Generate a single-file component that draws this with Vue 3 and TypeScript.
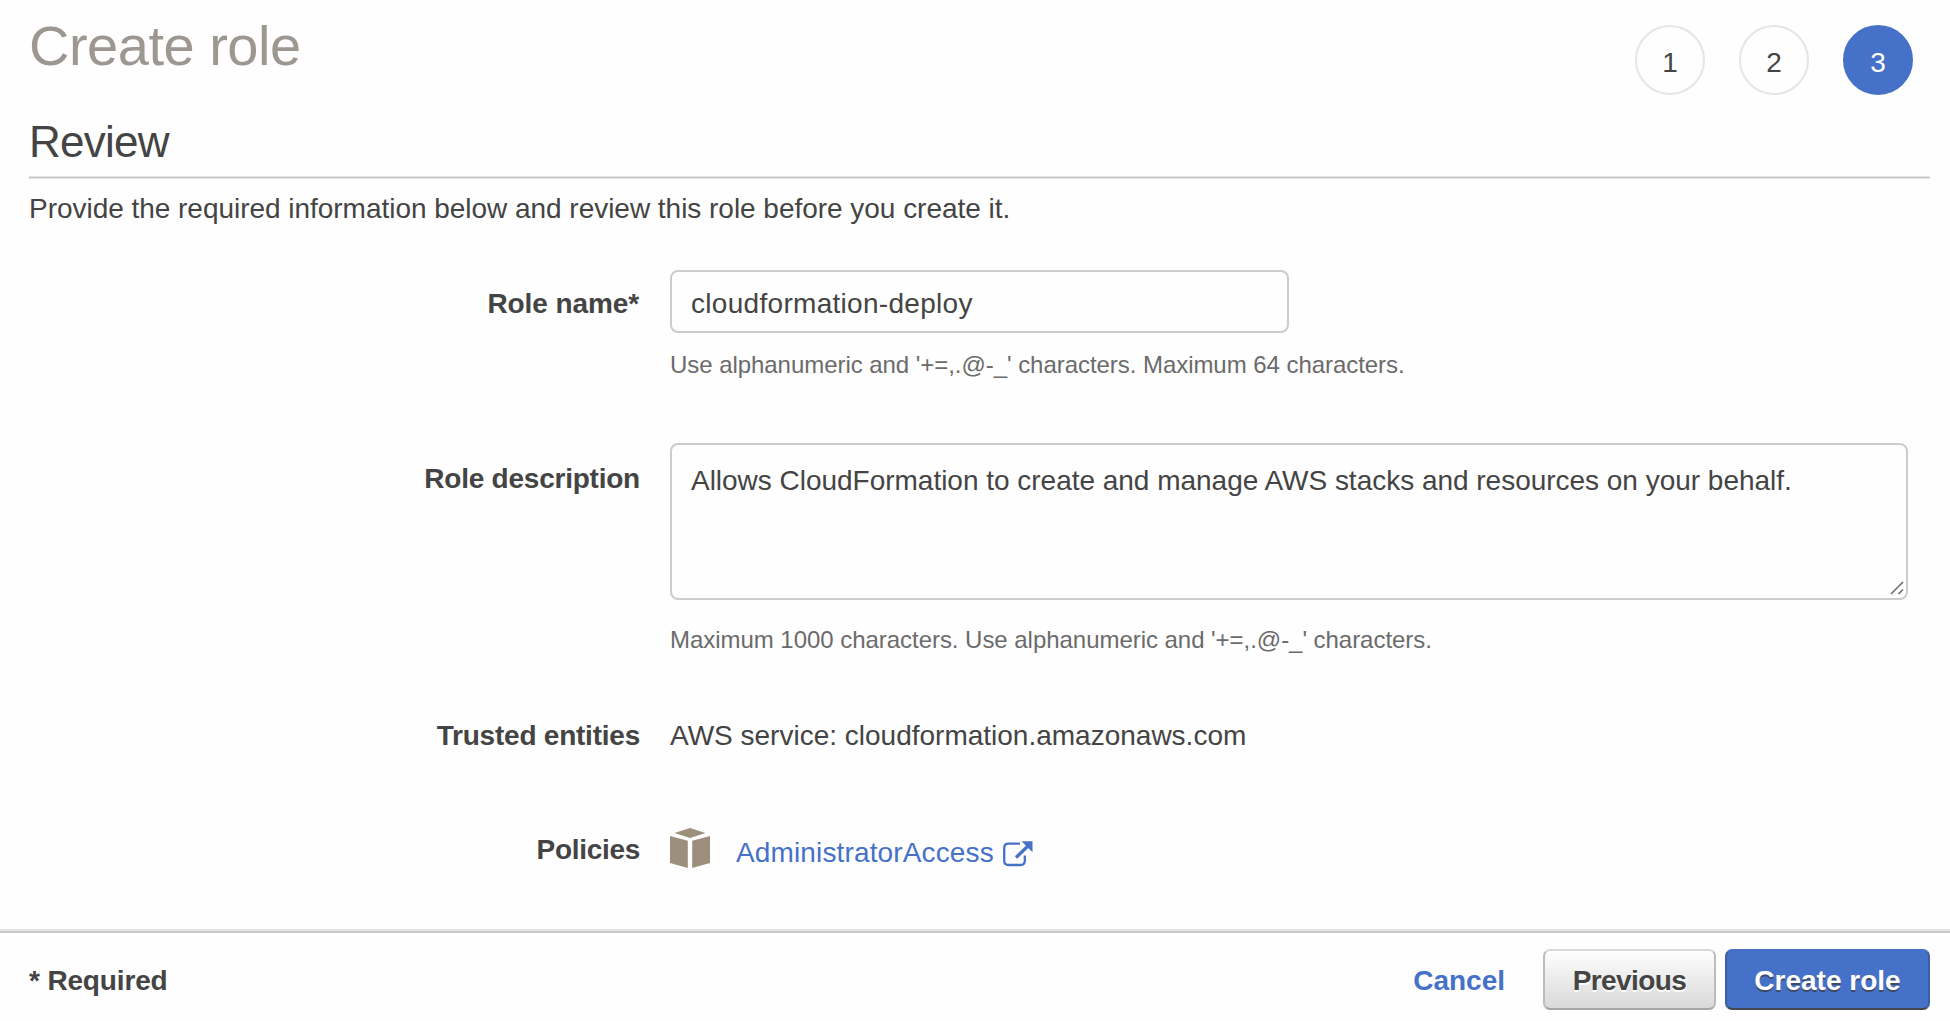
<script setup lang="ts">
import { ref } from 'vue'

const steps: number[] = [1, 2, 3]
const currentStep = ref<number>(3)
const roleName = ref<string>('cloudformation-deploy')
const roleDescription = ref<string>(
  'Allows CloudFormation to create and manage AWS stacks and resources on your behalf.'
)
</script>

<template>
  <div class="page">
    <header class="header">
      <h1 class="title">Create role</h1>
      <div class="steps">
        <div v-for="s in steps" :key="s" class="step" :class="{ active: s === currentStep }">{{ s }}</div>
      </div>
    </header>

    <main class="main">
      <h2 class="subtitle">Review</h2>
      <hr class="rule" />
      <p class="intro">Provide the required information below and review this role before you create it.</p>

      <div class="row row-name">
        <label class="label l-name">Role name*</label>
        <div class="field">
          <input v-model="roleName" class="input" type="text" />
          <div class="hint h-name">Use alphanumeric and '+=,.@-_' characters. Maximum 64 characters.</div>
        </div>
      </div>

      <div class="row row-desc">
        <label class="label l-desc">Role description</label>
        <div class="field">
          <div class="area-wrap">
            <textarea v-model="roleDescription" class="area"></textarea>
            <svg class="grip" viewBox="0 0 14 14" width="14" height="14">
              <path d="M1 13L13 1M8.5 13L13 8.5" fill="none" stroke="#6b6762" stroke-width="1.5" />
            </svg>
          </div>
          <div class="hint h-desc">Maximum 1000 characters. Use alphanumeric and '+=,.@-_' characters.</div>
        </div>
      </div>

      <div class="row row-trust">
        <div class="label l-trust">Trusted entities</div>
        <div class="value">AWS service: cloudformation.amazonaws.com</div>
      </div>

      <div class="row row-pol">
        <div class="label l-pol">Policies</div>
        <div class="policy">
          <svg class="cube" viewBox="0 0 40 40" width="40" height="40" fill="#9c8f7c">
            <path d="M4.500 5L20 0L35.500 5L20 10Z" />
            <path d="M0 8L17.800 12.800V40L0 35Z" />
            <path d="M40 8L22.200 12.800V40L40 35Z" />
          </svg>
          <a class="link">AdministratorAccess</a>
          <svg class="ext" viewBox="0 0 30 26" width="30" height="26">
            <path d="M17 2.600H5.500Q1.200 2.600 1.200 6.900V19.700Q1.200 24 5.500 24H17.500Q21.800 24 21.800 19.700V14.500" fill="none" stroke="#4671c8" stroke-width="2.300" />
            <path d="M13 16.500L25 5" fill="none" stroke="#4671c8" stroke-width="3.200" />
            <path d="M18.500 0.300H29.500V11.300Z" fill="#4671c8" />
          </svg>
        </div>
      </div>
    </main>

    <footer class="footer">
      <div class="required">* Required</div>
      <div class="actions">
        <a class="cancel">Cancel</a>
        <button class="btn prev">Previous</button>
        <button class="btn create">Create role</button>
      </div>
    </footer>
  </div>
</template>

<style>
body {
  margin: 0;
  background: #fefefe;
}
</style>

<style scoped>
.page {
  width: 1950px;
  height: 1021px;
  box-sizing: border-box;
  display: flex;
  flex-direction: column;
  overflow: hidden;
  background: #fefefe;
  color: #444;
  font-family: "Liberation Sans", Arial, sans-serif;
  font-size: 28px;
  line-height: 32px;
  white-space: nowrap;
}
.header {
  height: 112px;
  flex: none;
  display: flex;
  justify-content: space-between;
  padding: 0 37px 0 29px;
}
.title {
  margin: 14px 0 0;
  font-size: 56px;
  line-height: 64px;
  font-weight: 400;
  letter-spacing: -0.5px;
  color: #9c9791;
}
.steps {
  display: flex;
  gap: 34px;
  padding-top: 25px;
}
.step {
  width: 70px;
  height: 70px;
  box-sizing: border-box;
  border: 2px solid #e5e5e5;
  border-radius: 50%;
  line-height: 71px;
  text-align: center;
}
.step.active {
  background: #4671c8;
  border-color: #4671c8;
  color: #fff;
}
.main {
  height: 817px;
  flex: none;
  padding: 0 20px 0 29px;
}
.subtitle {
  height: 64px;
  margin: 0;
  font-size: 44px;
  line-height: 59px;
  font-weight: 400;
  letter-spacing: -0.75px;
}
.rule {
  height: 1px;
  margin: 0;
  border: 1px solid #e2e2e2;
  border-width: 1px 0;
  background: #c8c8c8;
}
.intro {
  margin: 14px 0 0;
  letter-spacing: -0.03px;
}
.row {
  display: flex;
}
.row-name {
  margin-top: 45px;
  height: 173px;
}
.row-desc {
  height: 277px;
}
.row-trust {
  height: 93px;
}
.label {
  width: 611px;
  flex: none;
  margin-right: 30px;
  font-weight: 700;
  text-align: right;
}
.l-name {
  padding-top: 18px;
  padding-right: 1px;
  width: 610px;
  letter-spacing: -0.1px;
}
.l-desc {
  padding-top: 20px;
  letter-spacing: -0.23px;
}
.l-trust {
  letter-spacing: -0.23px;
}
.l-pol {
  padding-top: 21px;
  letter-spacing: -0.3px;
}
.field {
  flex: none;
}
.input,
.area {
  display: block;
  box-sizing: border-box;
  margin: 0;
  border: 2px solid #ccc;
  border-radius: 8px;
  background: #fefefe;
  color: #444;
  font-family: inherit;
  font-size: 28px;
  outline: none;
}
.input {
  width: 619px;
  height: 63px;
  padding: 4px 19px 0;
  letter-spacing: 0.3px;
}
.area-wrap {
  position: relative;
  width: 1238px;
}
.area {
  width: 1238px;
  height: 157px;
  padding: 20px 19px 0;
  line-height: 32px;
  letter-spacing: -0.02px;
  resize: none;
  overflow: hidden;
}
.grip {
  position: absolute;
  right: 4px;
  bottom: 5px;
}
.hint {
  font-size: 24px;
  line-height: 28px;
  letter-spacing: -0.05px;
  color: #6b6b6b;
}
.h-name {
  margin-top: 18px;
}
.h-desc {
  margin-top: 26px;
  letter-spacing: -0.04px;
}
.policy {
  display: flex;
  align-items: flex-start;
  padding-top: 15px;
}
.link {
  margin: 9px 0 0 26px;
  letter-spacing: 0.14px;
  color: #4671c8;
}
.ext {
  margin: 13px 0 0 9px;
}
.footer {
  height: 92px;
  flex: none;
  box-sizing: border-box;
  display: flex;
  justify-content: space-between;
  border-top: 2px solid #e4e4e4;
  box-shadow: inset 0 2px 0 #c8c8c8;
  padding: 18px 20px 0 29px;
  font-weight: 700;
}
.required,
.cancel {
  padding-top: 16px;
}
.required {
  letter-spacing: -0.15px;
}
.actions {
  display: flex;
}
.cancel {
  margin-right: 38px;
  color: #4671c8;
}
.btn {
  height: 61px;
  box-sizing: border-box;
  padding: 1px 0 0;
  border-radius: 7px;
  font-family: inherit;
  font-size: 28px;
  font-weight: 700;
  line-height: 58px;
}
.prev {
  width: 173px;
  margin-right: 9px;
  border: 2px solid #bcbcbc;
  border-top-color: #d8d8d8;
  border-bottom-color: #a5a5a5;
  background: linear-gradient(#fefefe, #d9d9d9);
  color: #444;
  letter-spacing: -0.6px;
  text-shadow: 0 2px 0 #fff;
}
.create {
  width: 205px;
  border: 2px solid #3e5f9f;
  border-top-color: #4671c8;
  border-bottom-color: #444851;
  background: #4671c8;
  color: #fff;
  text-shadow: 0 2px 0 #3c4a66;
}
</style>
